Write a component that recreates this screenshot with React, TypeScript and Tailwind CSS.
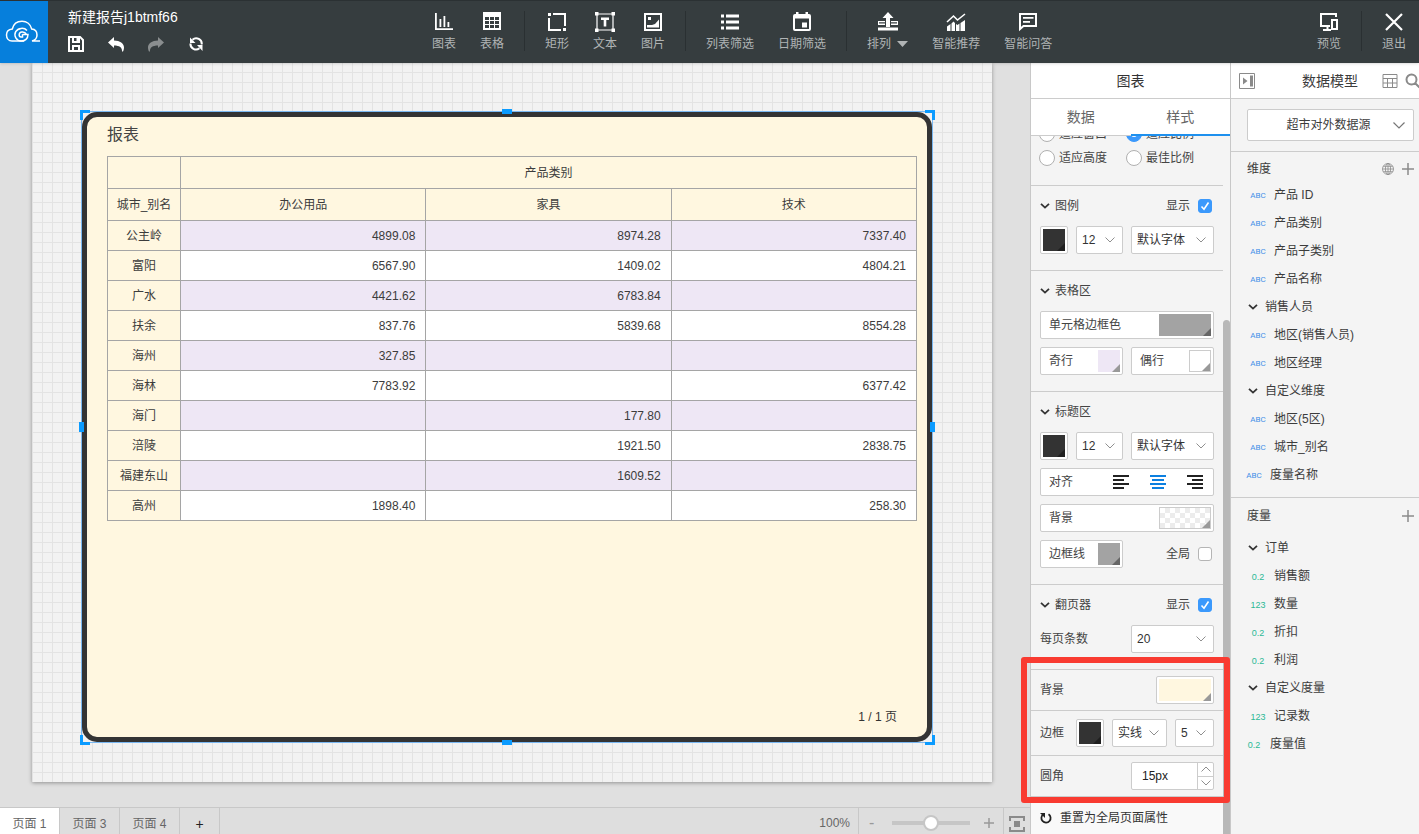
import { useState, type ReactNode } from "react";
import clsx from "clsx";

const rows: [string, string, string, string][] = [
  ["公主岭", "4899.08", "8974.28", "7337.40"],
  ["富阳", "6567.90", "1409.02", "4804.21"],
  ["广水", "4421.62", "6783.84", ""],
  ["扶余", "837.76", "5839.68", "8554.28"],
  ["海州", "327.85", "", ""],
  ["海林", "7783.92", "", "6377.42"],
  ["海门", "", "177.80", ""],
  ["涪陵", "", "1921.50", "2838.75"],
  ["福建东山", "", "1609.52", ""],
  ["高州", "1898.40", "", "258.30"],
];

type Field = { kind: "abc" | "num" | "int" | "group"; name: string; root?: boolean };

const dimensions: Field[] = [
  { kind: "abc", name: "产品 ID" },
  { kind: "abc", name: "产品类别" },
  { kind: "abc", name: "产品子类别" },
  { kind: "abc", name: "产品名称" },
  { kind: "group", name: "销售人员" },
  { kind: "abc", name: "地区(销售人员)" },
  { kind: "abc", name: "地区经理" },
  { kind: "group", name: "自定义维度" },
  { kind: "abc", name: "地区(5区)" },
  { kind: "abc", name: "城市_别名" },
  { kind: "abc", name: "度量名称", root: true },
];

const measures: Field[] = [
  { kind: "group", name: "订单" },
  { kind: "num", name: "销售额" },
  { kind: "int", name: "数量" },
  { kind: "num", name: "折扣" },
  { kind: "num", name: "利润" },
  { kind: "group", name: "自定义度量" },
  { kind: "int", name: "记录数" },
  { kind: "num", name: "度量值", root: true },
];

const icons = {
  chart: (
    <path d="M1 1h1.800v15.200H19V18H1zM5.500 7h1.800v8H5.500zM9.500 4h1.800v11H9.500zM13.500 10h1.800v5h-1.800z" />
  ),
  table: (
    <path
      fillRule="evenodd"
      d="M1 0h18v18H1zM3 5v3h4V5zM8 5v3h4V5zM13 5v3h4V5zM3 9v3h4V9zM8 9v3h4V9zM13 9v3h4V9zM3 13v3h4v-3zM8 13v3h4v-3zM13 13v3h4v-3z"
    />
  ),
  rect: (
    <path d="M1 1h3v3H1zM16 16h3v3h-3zM6 1h13v13h-2V3H6zM1 6h2v11h11v2H1z" />
  ),
  text: (
    <>
      <path d="M2 2h16v16H2z" fill="none" stroke="currentColor" strokeWidth="1.200" />
      <path d="M0 0h3.500v3.500H0zM16.500 0H20v3.500h-3.500zM0 16.500h3.500V20H0zM16.500 16.500H20V20h-3.500zM6 5.500h8V8h-2.700v6.500H8.700V8H6z" />
    </>
  ),
  image: (
    <path
      fillRule="evenodd"
      d="M1 1h18v18H1zM3 3v14h14V3zM5 5h3v3H5zM4 15.500V13h5l3-1 4-4.500v8z"
    />
  ),
  list: (
    <path d="M1 2.500h3v3H1zM6 2.500h13v3H6zM1 8.500h3v3H1zM6 8.500h13v3H6zM1 14.500h3v3H1zM6 14.500h13v3H6z" />
  ),
  calendar: (
    <path
      fillRule="evenodd"
      d="M4 0h2.500v2h7V0H16v2h1a2 2 0 0 1 2 2v13a2 2 0 0 1-2 2H3a2 2 0 0 1-2-2V4a2 2 0 0 1 2-2h1zM3 6.500V17h14V6.500zM10 10.500h5v5h-5z"
    />
  ),
  arrange: (
    <path
      fillRule="evenodd"
      d="M10 0l5.500 6H12v9H8V6H4.500zM0 15.500h20v3H0zM0 9h7v4H0zM1 10.200v1.300h6v-1.300zM13 9h7v4h-7zM13 10.200v1.300h6v-1.300z"
    />
  ),
  trend: (
    <>
      <path d="M1 10L7.500 4l4 4L19 2" fill="none" stroke="currentColor" strokeWidth="1.600" />
      <path d="M1 14.500L4.500 12v7H1zM5.500 11.500l2-2L9 11v8H5.500zM10 12l1.500 1 2-1.500V19H10zM14.500 11L19 8v11h-4.500z" />
    </>
  ),
  chat: (
    <>
      <path d="M2 2h16v12H5.500L2 17z" fill="none" stroke="currentColor" strokeWidth="2" />
      <path d="M5 5h10.500v1.800H5zM5 9h7v1.800H5z" />
    </>
  ),
  preview: (
    <>
      <path d="M17 5V2H2v12h9M8.500 14v4M4 18h8" fill="none" stroke="currentColor" strokeWidth="2" />
      <path d="M13 8h5v9h-5z" fill="none" stroke="currentColor" strokeWidth="2" />
    </>
  ),
  close: (
    <path d="M2 2l16 16M18 2L2 18" fill="none" stroke="currentColor" strokeWidth="2.200" />
  ),
};

const Tool = ({
  icon,
  label,
  caret,
}: {
  icon: keyof typeof icons;
  label: string;
  caret?: boolean;
}) => (
  <button className="flex flex-col items-start px-3 pt-[11px] text-xs leading-4 whitespace-nowrap text-[#b0b4b5]">
    <svg
      viewBox="0 0 20 20"
      className={clsx("h-5 w-5 text-white", caret ? "ml-[11px]" : "self-center")}
      fill="currentColor"
    >
      {icons[icon]}
    </svg>
    <span className="mt-1 flex items-center gap-1.5">
      {label}
      {caret && (
        <svg viewBox="0 0 11 6" className="h-1.5 w-[11px]" fill="currentColor">
          <path d="M0 0h11L5.500 6z" />
        </svg>
      )}
    </span>
  </button>
);

const Divider = () => <div className="mx-2 mt-[10px] h-10 w-px bg-[#2a3032]" />;

const Logo = () => (
  <div className="flex h-full w-12 items-center bg-[#067fdc]">
    <svg viewBox="0 0 48 24" className="h-6 w-12" fill="none" stroke="#fff" strokeWidth="1.500">
      <path d="M24 21H12C8.700 21 6.500 18.400 6.500 15c0-3.300 2.400-5.700 5.800-6C13.400 4 17.300 1.200 22 1.200c4.700 0 8.600 3 9.700 7.800 3.300.300 5.300 2.700 5.300 5.900 0 3-1.800 5.200-5 6h8" />
      <path d="M27 10.500c-2.800-3.200-9-2.800-11.300 1.200-2.200 4.200.800 9 5.300 9.300 4 .200 7-2.500 7-6.500h-5.500M22.500 14.300v2.700h-1.500c-2.600-.300-2.500-4.600.800-5 2-.200 3.700.500 4.700 2.300" />
    </svg>
  </div>
);

const Header = () => (
  <header className="relative z-10 flex h-[63px] shrink-0 border-t border-[#2b3133] bg-[#363d3f] shadow-sm">
    <Logo />
    <div className="w-[372px] pt-[6px] pl-5">
      <h1 className="text-sm leading-5 text-white">新建报告j1btmf66</h1>
      <div className="mt-[9px] flex gap-6 text-white">
        <button aria-label="保存">
          <svg viewBox="0 0 16 16" className="h-4 w-4" fill="currentColor">
            <path fillRule="evenodd" d="M0 0h12.500L16 3.500V16H0zM2 2v12h2V9h8v5h2V4.500L12 2.300V7H4V2zM6 2v3h2.500V2zM6 11v3h4v-3z" />
          </svg>
        </button>
        <button aria-label="撤销">
          <svg viewBox="0 0 16 16" className="h-4 w-4" fill="currentColor">
            <path d="M6 1v3.500c6 0 10 3 10 7 0 1.500-.500 3-1 4h-1c.300-4-2.500-6-8-6V12L0 6.500z" />
          </svg>
        </button>
        <button aria-label="重做" disabled className="text-[#8a8e8f]">
          <svg viewBox="0 0 16 16" className="h-4 w-4" fill="currentColor">
            <path d="M10 1v3.500c-6 0-10 3-10 7 0 1.500.500 3 1 4h1c-.300-4 2.500-6 8-6V12l6-5.500z" />
          </svg>
        </button>
        <button aria-label="刷新">
          <svg viewBox="0 0 16 16" className="h-4 w-4" fill="none" stroke="currentColor" strokeWidth="2">
            <path d="M4.500 3.800A5.500 5.500 0 0 1 13.700 8.500M11.500 12.200A5.500 5.500 0 0 1 2.500 7.500" />
            <path d="M2 1.500V7h5.500zM14.500 15V9H9z" fill="currentColor" stroke="none" />
          </svg>
        </button>
      </div>
    </div>
    <nav className="flex flex-1 items-start">
      <Tool icon="chart" label="图表" />
      <Tool icon="table" label="表格" />
      <Divider />
      <Tool icon="rect" label="矩形" />
      <Tool icon="text" label="文本" />
      <Tool icon="image" label="图片" />
      <Divider />
      <Tool icon="list" label="列表筛选" />
      <Tool icon="calendar" label="日期筛选" />
      <Divider />
      <Tool icon="arrange" label="排列" caret />
      <Tool icon="trend" label="智能推荐" />
      <Tool icon="chat" label="智能问答" />
    </nav>
    <div className="flex items-start pr-px">
      <Tool icon="preview" label="预览" />
      <Divider />
      <Tool icon="close" label="退出" />
    </div>
  </header>
);

const Handles = () => (
  <>
    <i className="absolute -top-[2px] -left-[2px] h-2.5 w-2.5 border-t-[3px] border-l-[3px] border-[#0b9bff]" />
    <i className="absolute -top-[2px] -right-[3px] h-2.5 w-2.5 border-t-[3px] border-r-[3px] border-[#0b9bff]" />
    <i className="absolute -bottom-[3px] -left-[2px] h-2.5 w-2.5 border-b-[3px] border-l-[3px] border-[#0b9bff]" />
    <i className="absolute -right-[3px] -bottom-[3px] h-2.5 w-2.5 border-r-[3px] border-b-[3px] border-[#0b9bff]" />
    <i className="absolute -top-[3px] left-1/2 h-[5px] w-2.5 -translate-x-1/2 bg-[#0b9bff]" />
    <i className="absolute -bottom-[3px] left-1/2 h-[5px] w-2.5 -translate-x-1/2 bg-[#0b9bff]" />
    <i className="absolute top-1/2 -left-[3px] h-2.5 w-[5px] -translate-y-1/2 bg-[#0b9bff]" />
    <i className="absolute top-1/2 -right-[3px] h-2.5 w-[5px] -translate-y-1/2 bg-[#0b9bff]" />
  </>
);

const ReportTable = () => (
  <table className="w-full table-fixed border-collapse text-center text-xs leading-4 text-[#3c3c3c]">
    <colgroup>
      <col className="w-[73px]" />
      <col />
      <col />
      <col />
    </colgroup>
    <thead>
      <tr className="h-8">
        <td className="border border-[#a5a5a5]" />
        <th colSpan={3} className="border border-[#a5a5a5] font-normal">
          产品类别
        </th>
      </tr>
      <tr className="h-8">
        {["城市_别名", "办公用品", "家具", "技术"].map((name) => (
          <th key={name} className="border border-[#a5a5a5] font-normal">
            {name}
          </th>
        ))}
      </tr>
    </thead>
    <tbody>
      {rows.map(([city, ...values], i) => (
        <tr key={city} className="h-[30px]">
          <th className="border border-[#a5a5a5] font-normal">{city}</th>
          {values.map((value, j) => (
            <td
              key={j}
              className={clsx(
                "border border-[#a5a5a5] pr-2.5 text-right",
                i % 2 === 0 ? "bg-[#eee7f5]" : "bg-white"
              )}
            >
              {value}
            </td>
          ))}
        </tr>
      ))}
    </tbody>
  </table>
);

const Canvas = () => (
  <main className="min-h-0 flex-1 overflow-hidden bg-[#e0e0e0] pr-[38px] pl-8">
    <div className="h-[719px] bg-[#f2f2f2] bg-[linear-gradient(to_right,#e3e3e3_1px,transparent_1px),linear-gradient(to_bottom,#e3e3e3_1px,transparent_1px)] bg-[size:10px_10px] bg-[position:0_-1px] pt-12 pr-[59px] pl-[49px] shadow-[0_1px_4px_rgba(0,0,0,0.35)]">
      <div className="relative h-[632px] border border-[#7ab8f2]">
        <section className="flex h-full flex-col rounded-[15px] border-[5px] border-[#343434] bg-[#fff7e0] pt-2 pr-2.5 pl-5">
          <h2 className="text-base leading-5 text-[#444]">报表</h2>
          <div className="mt-[11px]">
            <ReportTable />
          </div>
          <p className="mt-auto pr-5 pb-3 text-right text-xs leading-4 text-[#333]">
            1 / 1 页
          </p>
        </section>
        <Handles />
      </div>
    </div>
  </main>
);

const PageBar = () => {
  const [page, setPage] = useState("页面 1");
  return (
    <footer className="flex h-[27px] shrink-0 border-t border-[#c8c8c8] bg-[#dedede] text-xs leading-4 text-[#666]">
      {["页面 1", "页面 3", "页面 4"].map((name) => (
        <button
          key={name}
          onClick={() => setPage(name)}
          className={clsx(
            "w-[60px] border-r border-[#c8c8c8] pt-1.5",
            page === name && "bg-white"
          )}
        >
          {name}
        </button>
      ))}
      <button aria-label="新建页面" className="w-10 border-r border-[#c8c8c8] pt-1.5 text-sm leading-4 text-[#222]">
        +
      </button>
      <span className="ml-auto border-r border-[#c8c8c8] pt-[7px] pr-2">100%</span>
      <div className="flex w-[145px] items-center justify-between border-r border-[#c8c8c8] pt-1 pr-2 pl-2.5 text-[#999]">
        <button aria-label="缩小" className="w-2.5 text-left text-base leading-4">
          -
        </button>
        <input
          type="range"
          aria-label="缩放比例"
          className="h-1 w-[78px] appearance-none bg-[#c6c6c6] [&::-webkit-slider-thumb]:h-4 [&::-webkit-slider-thumb]:w-4 [&::-webkit-slider-thumb]:appearance-none [&::-webkit-slider-thumb]:rounded-full [&::-webkit-slider-thumb]:border-2 [&::-webkit-slider-thumb]:border-[#c6c6c6] [&::-webkit-slider-thumb]:bg-white"
        />
        <button aria-label="放大">
          <svg viewBox="0 0 12 12" className="h-3 w-3" stroke="currentColor" strokeWidth="1.500">
            <path d="M6 1v10M1 6h10" />
          </svg>
        </button>
      </div>
      <button aria-label="适应屏幕" className="flex w-[26px] justify-center pt-2 text-[#8a8a8a]">
        <svg viewBox="0 0 16 16" className="h-4 w-4" fill="none" stroke="currentColor" strokeWidth="2">
          <path d="M1 5V1h14v4M1 11v4h14v-4" />
          <path d="M5 5h6v6H5z" fill="currentColor" stroke="none" />
        </svg>
      </button>
    </footer>
  );
};

const Chevron = ({ up, className }: { up?: boolean; className?: string }) => (
  <svg
    viewBox="0 0 10 6"
    className={clsx("pointer-events-none h-1.5 w-2.5", up && "rotate-180", className)}
    fill="none"
    stroke="#8f8f8f"
  >
    <path d="M.5.5L5 5 9.500.5" />
  </svg>
);

const BoldChevron = () => (
  <svg viewBox="0 0 10 6" className="h-1.5 w-2.5" fill="none" stroke="#333" strokeWidth="1.800">
    <path d="M1 .8L5 4.600 9 .8" />
  </svg>
);

const Select = ({ label, value, className }: { label: string; value: string; className: string }) => (
  <span className={clsx("relative flex items-center", className)}>
    <select
      aria-label={label}
      className="h-7 w-full appearance-none rounded-[2px] border border-[#ccc] bg-white pl-[5px] text-xs text-[#333]"
    >
      <option>{value}</option>
    </select>
    <Chevron className="absolute right-2" />
  </span>
);

const swatchColors = {
  dark: "bg-[#333]",
  gray: "bg-[#a3a3a3]",
  purple: "bg-[#eee7f5]",
  white: "border border-[#ccc] bg-white",
  cream: "bg-[#fff7e0]",
  none: "border border-[#ccc] bg-[repeating-conic-gradient(#ececec_0_25%,#fff_0_50%)] bg-[size:10px_10px]",
};

// color block with the small corner fold in the bottom right
const Swatch = ({ color, className }: { color: keyof typeof swatchColors; className: string }) => (
  <span className={clsx("flex h-[22px] items-end justify-end", swatchColors[color], className)}>
    <svg
      viewBox="0 0 8 8"
      className="h-2 w-2"
      fill={color === "dark" ? "#1f1f1f" : color === "gray" ? "#666" : "#999"}
    >
      <path d="M8 0v8H0z" />
    </svg>
  </span>
);

const ColorButton = ({
  label,
  color,
  swatch,
  className,
}: {
  label?: string;
  color: keyof typeof swatchColors;
  swatch: string;
  className: string;
}) => (
  <button
    aria-label={label ?? "颜色"}
    className={clsx(
      "flex h-7 items-center rounded-[2px] border border-[#ccc] bg-white px-0.5 text-xs text-[#444]",
      label ? "justify-between pl-2" : "justify-center",
      className
    )}
  >
    {label}
    <Swatch color={color} className={swatch} />
  </button>
);

const Checkbox = ({ label, checked }: { label: string; checked?: boolean }) => (
  <label className="ml-auto flex items-center gap-2 pr-0.5">
    {label}
    <span className="grid place-items-center">
      <input
        type="checkbox"
        defaultChecked={checked}
        className="peer h-3.5 w-3.5 appearance-none rounded-[3px] border border-[#b5b5b5] bg-white [grid-area:1/1] checked:border-[#3b99fc] checked:bg-[#3b99fc]"
      />
      <svg
        viewBox="0 0 10 10"
        className="pointer-events-none invisible h-2.5 w-2.5 [grid-area:1/1] peer-checked:visible"
        fill="none"
        stroke="#fff"
        strokeWidth="1.600"
      >
        <path d="M1.500 5.500L4 8.200 8.500 1.500" />
      </svg>
    </span>
  </label>
);

const Radio = ({ label, checked }: { label: string; checked?: boolean }) => (
  <label className="flex w-[87px] items-center gap-1 leading-4">
    <span className="grid place-items-center">
      <input
        type="radio"
        name="fit"
        defaultChecked={checked}
        className="peer h-4 w-4 appearance-none rounded-full border border-[#b0b0b0] bg-white [grid-area:1/1] checked:border-[#3b99fc] checked:bg-[#3b99fc]"
      />
      <i className="pointer-events-none invisible h-1.5 w-1.5 rounded-full bg-white [grid-area:1/1] peer-checked:visible" />
    </span>
    {label}
  </label>
);

const Section = ({
  title,
  extra,
  children,
}: {
  title: string;
  extra?: ReactNode;
  children: ReactNode;
}) => (
  <section className="border-b border-[#ccc] px-[9px] pt-2.5 pb-4">
    <div className="flex h-5 items-center">
      <BoldChevron />
      <h3 className="ml-[5px]">{title}</h3>
      {extra}
    </div>
    <div className="mt-2.5 flex flex-col gap-2">{children}</div>
  </section>
);

const FontRow = () => (
  <div className="flex gap-2">
    <ColorButton color="dark" swatch="w-[22px]" className="w-7 shrink-0" />
    <Select label="字号" value="12" className="w-[47px] shrink-0" />
    <Select label="字体" value="默认字体" className="flex-1" />
  </div>
);

const alignLines = {
  left: "M0 1h16M0 5h11M0 9h16M0 13h11",
  center: "M0 1h16M2 5h12M0 9h16M2 13h12",
  right: "M0 1h16M5 5h11M0 9h16M5 13h11",
};

const AlignRow = () => {
  const [align, setAlign] = useState("center");
  return (
    <div className="flex h-7 items-center rounded-[2px] border border-[#ccc] bg-white pr-2.5 pl-2">
      <span className="flex-1">对齐</span>
      <div className="flex gap-[21px]">
        {(["left", "center", "right"] as const).map((key) => (
          <button
            key={key}
            aria-label={key}
            onClick={() => setAlign(key)}
            className={align === key ? "text-[#0d80e0]" : "text-[#222]"}
          >
            <svg viewBox="0 0 16 14" className="h-3.5 w-4" stroke="currentColor" strokeWidth="2">
              <path d={alignLines[key]} />
            </svg>
          </button>
        ))}
      </div>
    </div>
  );
};

const StylePanel = () => (
  <aside className="relative flex w-[200px] shrink-0 flex-col border-l border-[#c8c8c8] bg-[#f4f4f4] text-xs leading-4 text-[#444]">
    <h2 className="h-9 shrink-0 border-b border-[#ccc] bg-white text-center text-sm leading-9 text-[#333]">
      图表
    </h2>
    <div className="flex h-[37px] shrink-0 border-b border-[#ccc] bg-white text-sm text-[#666]">
      <button className="flex-1">数据</button>
      <button className="-mb-px flex-1 border-b-2 border-[#1e90ee]">样式</button>
    </div>
    <div className="flex min-h-0 flex-1 overflow-hidden">
      <div className="flex-1">
        <div className="flex h-[50px] flex-col justify-end gap-2 overflow-hidden border-b border-[#ccc] pb-[19px] pl-2">
          <div className="flex">
            <Radio label="适应窗口" />
            <Radio label="适应比例" checked />
          </div>
          <div className="flex">
            <Radio label="适应高度" />
            <Radio label="最佳比例" />
          </div>
        </div>
        <Section title="图例" extra={<Checkbox label="显示" checked />}>
          <FontRow />
        </Section>
        <Section title="表格区">
          <ColorButton label="单元格边框色" color="gray" swatch="w-[52px]" className="w-full" />
          <div className="flex gap-2">
            <ColorButton label="奇行" color="purple" swatch="w-[22px]" className="flex-1" />
            <ColorButton label="偶行" color="white" swatch="w-[22px]" className="flex-1" />
          </div>
        </Section>
        <Section title="标题区">
          <FontRow />
          <AlignRow />
          <ColorButton label="背景" color="none" swatch="w-[52px]" className="w-full" />
          <div className="flex">
            <ColorButton label="边框线" color="gray" swatch="w-[22px]" className="w-[83px]" />
            <Checkbox label="全局" />
          </div>
        </Section>
        <Section title="翻页器" extra={<Checkbox label="显示" checked />}>
          <div className="flex items-center justify-between">
            <span>每页条数</span>
            <Select label="每页条数" value="20" className="w-[83px]" />
          </div>
        </Section>
        <div className="flex items-center justify-between border-b border-[#ccc] px-[9px] py-1.5">
          <span>背景</span>
          <ColorButton color="cream" swatch="w-[52px]" className="w-[58px]" />
        </div>
        <div className="flex items-center gap-2 border-b border-[#ccc] px-[9px] py-2">
          <span className="w-7">边框</span>
          <ColorButton color="dark" swatch="w-[22px]" className="w-7 shrink-0" />
          <Select label="线型" value="实线" className="w-[55px]" />
          <Select label="线宽" value="5" className="flex-1" />
        </div>
        <div className="flex items-center justify-between border-b border-[#ccc] px-[9px] py-1.5">
          <label htmlFor="radius">圆角</label>
          <div className="flex h-7 w-[83px] rounded-[2px] border border-[#ccc] bg-white">
            <input id="radius" defaultValue="15px" className="w-0 flex-1 pl-2.5 text-xs text-[#222]" />
            <div className="flex w-4 flex-col border-l border-[#ccc]">
              <button aria-label="增大" className="grid flex-1 place-items-center border-b border-[#ccc]">
                <Chevron up />
              </button>
              <button aria-label="减小" className="grid flex-1 place-items-center">
                <Chevron />
              </button>
            </div>
          </div>
        </div>
        <button className="flex h-[42px] w-full items-center gap-2 bg-[#f9f9f9] pl-[9px] text-[#333]">
          <svg viewBox="0 0 12 12" className="h-3 w-3" fill="none" stroke="#222" strokeWidth="1.800">
            <path d="M8.500 2.200A4.600 4.600 0 1 1 3.200 2.400" />
            <path d="M0 1h5v5z" fill="#222" stroke="none" />
          </svg>
          重置为全局页面属性
        </button>
      </div>
      <div className="flex w-[7px] flex-col pt-[184px]">
        <div className="flex-1 rounded-t-full bg-[#b8b8b8]" />
      </div>
    </div>
    <div className="pointer-events-none absolute top-[594px] right-0 -left-2.5 h-[146px] rounded-[3px] border-[6px] border-[#f93b31]" />
  </aside>
);

const FieldIcon = ({ kind }: { kind: Field["kind"] }) => (
  <span
    className={clsx(
      "flex w-[14px] shrink-0 justify-center pt-px leading-3",
      kind === "abc" ? "font-[Roboto,sans-serif] text-[8px] text-[#3f8fe8]" : "text-[9px] text-[#2bb996]"
    )}
  >
    {kind === "abc" ? "ABC" : kind === "num" ? "0.2" : "123"}
  </span>
);

const FieldList = ({ fields }: { fields: Field[] }) => (
  <ul>
    {fields.map(({ kind, name, root }) =>
      kind === "group" ? (
        <li key={name} className="flex h-7 items-center gap-[7px] pl-[17px]">
          <BoldChevron />
          {name}
        </li>
      ) : (
        <li key={name} className={clsx("flex h-7 items-center gap-2", root ? "pl-4" : "pl-5")}>
          <FieldIcon kind={kind} />
          <span className="pl-px">{name}</span>
        </li>
      )
    )}
  </ul>
);

const AddButton = () => (
  <button aria-label="添加">
    <svg viewBox="0 0 12 12" className="h-3 w-3" stroke="#8a8a8a" strokeWidth="1.500">
      <path d="M6 0v12M0 6h12" />
    </svg>
  </button>
);

const DataPanel = () => (
  <aside className="w-[189px] shrink-0 overflow-hidden border-l border-[#c8c8c8] bg-[#f4f4f4] text-xs leading-4 text-[#3c3c3c]">
    <div className="flex h-9 items-center border-b border-[#ccc] bg-white pl-2">
      <button aria-label="收起">
        <svg viewBox="0 0 16 16" className="h-4 w-4" fill="#8a8a8a">
          <path d="M.5.5h15v15H.5z" fill="none" stroke="#8a8a8a" />
          <path d="M4 4.500v7L8.500 8zM11 2.500h3v11h-3z" />
        </svg>
      </button>
      <h2 className="ml-[47px] text-sm whitespace-nowrap">数据模型</h2>
      <button aria-label="数据表" className="ml-6 shrink-0">
        <svg viewBox="0 0 16 16" className="h-4 w-4" fill="none" stroke="#8a8a8a">
          <path d="M1 1.500h14v13H1zM1 5.500h14M1 10h14M5.500 5.500v9M10.500 5.500v9" />
        </svg>
      </button>
      <button aria-label="搜索" className="ml-[7px] shrink-0">
        <svg viewBox="0 0 16 16" className="h-4 w-4" fill="none" stroke="#8a8a8a" strokeWidth="2">
          <path d="M6.500 1.500a5 5 0 1 0 0 10 5 5 0 0 0 0-10zM10 10l4.500 4.500" />
        </svg>
      </button>
    </div>
    <div className="border-b border-[#ccc] py-2.5 pr-[5px] pl-4">
      <div className="relative flex items-center">
        <select
          aria-label="数据源"
          className="h-8 w-full appearance-none rounded-[2px] border border-[#ccc] bg-white pr-1 text-center text-xs [text-align-last:center]"
        >
          <option>超市对外数据源</option>
        </select>
        <svg
          viewBox="0 0 12 7"
          className="pointer-events-none absolute right-[9px] h-[7px] w-3"
          fill="none"
          stroke="#777"
          strokeWidth="1.200"
        >
          <path d="M.5.5L6 6 11.500.5" />
        </svg>
      </div>
    </div>
    <section className="border-b border-[#ccc] pt-[7px] pb-2">
      <div className="flex h-5 items-center pr-[5px] pl-4">
        <h3 className="flex-1">维度</h3>
        <button aria-label="语言" className="mr-2">
          <svg viewBox="0 0 12 12" className="h-3 w-3" fill="none" stroke="#8a8a8a" strokeWidth=".8">
            <circle cx="6" cy="6" r="5.500" />
            <ellipse cx="6" cy="6" rx="2.600" ry="5.500" />
            <path d="M.5 6h11M1.300 3.300h9.400M1.300 8.700h9.400M6 .5v11" />
          </svg>
        </button>
        <AddButton />
      </div>
      <div className="mt-0.5">
        <FieldList fields={dimensions} />
      </div>
    </section>
    <section className="pt-2">
      <div className="flex h-5 items-center pr-[5px] pl-4">
        <h3 className="flex-1">度量</h3>
        <AddButton />
      </div>
      <div className="mt-2">
        <FieldList fields={measures} />
      </div>
    </section>
  </aside>
);

export default function App() {
  return (
    <div className="flex h-screen flex-col overflow-hidden font-['Liberation_Sans','Noto_Sans_CJK_SC',sans-serif]">
      <Header />
      <div className="flex min-h-0 flex-1">
        <div className="flex min-w-0 flex-1 flex-col">
          <Canvas />
          <PageBar />
        </div>
        <StylePanel />
        <DataPanel />
      </div>
    </div>
  );
}
